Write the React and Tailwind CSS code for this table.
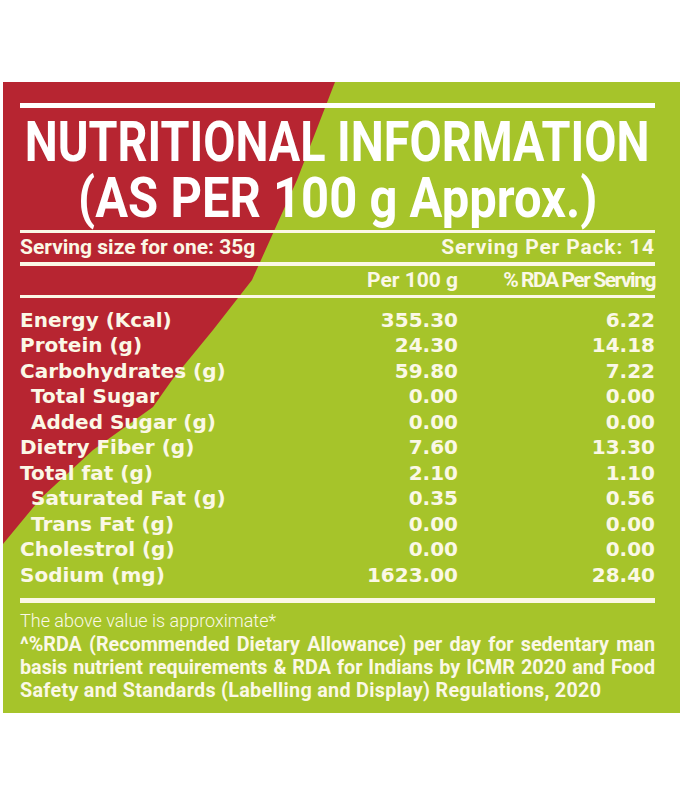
import React from 'react';

const rows = [
  { name: 'Energy (Kcal)', per: '355.30', rda: '6.22' },
  { name: 'Protein (g)', per: '24.30', rda: '14.18' },
  { name: 'Carbohydrates (g)', per: '59.80', rda: '7.22' },
  { name: 'Total Sugar', per: '0.00', rda: '0.00', sub: true },
  { name: 'Added Sugar (g)', per: '0.00', rda: '0.00', sub: true },
  { name: 'Dietry Fiber (g)', per: '7.60', rda: '13.30' },
  { name: 'Total fat (g)', per: '2.10', rda: '1.10' },
  { name: 'Saturated Fat (g)', per: '0.35', rda: '0.56', sub: true },
  { name: 'Trans Fat (g)', per: '0.00', rda: '0.00', sub: true },
  { name: 'Cholestrol (g)', per: '0.00', rda: '0.00' },
  { name: 'Sodium (mg)', per: '1623.00', rda: '28.40' },
];

const Rule = ({ h }) => <div className={`${h} w-full bg-[#fbf8e6]`} />;

export default function App() {
  return (
    <div className="w-full h-[800px] bg-white pt-[82px] pl-[3px] font-['Roboto',sans-serif]">
      <div className="relative w-[677px] h-[631px] bg-[#a6c42a] overflow-hidden">
        {/* red wedge in the corner */}
        <svg className="absolute inset-0" width="677" height="631" viewBox="0 0 677 631">
          <path
            d="M0,0 L332,0 L294,98 L249,198 L210,248 L169,298 L150,325 L90,368 L38,416 L0,462 Z"
            fill="#b72531"
          />
        </svg>

        <div className="relative pl-[17px] pr-[25px] pt-[21px] text-[#fbf8e6]">
          <div className="h-[5px] w-full bg-white" />

          {/* Title */}
          <div className="h-[122px] pt-[6px] flex flex-col text-white font-bold">
            <div className="h-[56px] flex items-center justify-center">
              <span className="inline-block whitespace-nowrap text-[56px] leading-[50px] scale-x-[0.835]">NUTRITIONAL INFORMATION</span>
            </div>
            <div className="h-[56px] flex items-center justify-center">
              <span className="inline-block whitespace-nowrap text-[55px] leading-[50px] scale-x-[0.89]">(AS PER 100 g Approx.)</span>
            </div>
          </div>

          <Rule h="h-[3px]" />
          <div className="h-[29px] flex items-center justify-between text-[21px] font-bold leading-none">
            <span>Serving size for one: 35g</span>
            <span className="tracking-[0.04em]">Serving Per Pack: 14</span>
          </div>
          <Rule h="h-[4px]" />
          <div className="h-[29px] flex items-center text-[21px] font-bold leading-none">
            <span className="w-[438px] text-right">Per 100 g</span>
            <span className="flex-1 text-right tracking-[-0.07em]">% RDA Per Serving</span>
          </div>
          <Rule h="h-[3px]" />

          {/* Values */}
          <div className="pt-[9px] font-['DejaVu_Sans',sans-serif] font-bold text-[20px] leading-none">
            {rows.map((r) => (
              <div key={r.name} className="h-[25.5px] flex items-center">
                <span className={r.sub ? 'w-[300px] pl-[11px]' : 'w-[300px]'}>{r.name}</span>
                <span className="w-[138px] text-right">{r.per}</span>
                <span className="flex-1 text-right">{r.rda}</span>
              </div>
            ))}
          </div>

          <div className="mt-[10px]">
            <Rule h="h-[5px]" />
          </div>

          {/* Notes */}
          <div className="pt-[6px] text-[18px] font-light leading-[24px]">The above value is approximate*</div>
          <div className="text-[19.75px] font-bold leading-[23px] whitespace-nowrap">
            <div className="text-justify [text-align-last:justify]">^%RDA (Recommended Dietary Allowance) per day for sedentary man</div>
            <div className="text-justify [text-align-last:justify]">basis nutrient requirements &amp; RDA for Indians by ICMR 2020 and Food</div>
            <div className="tracking-[0.015em]">Safety and Standards (Labelling and Display) Regulations, 2020</div>
          </div>
        </div>
      </div>
    </div>
  );
}
